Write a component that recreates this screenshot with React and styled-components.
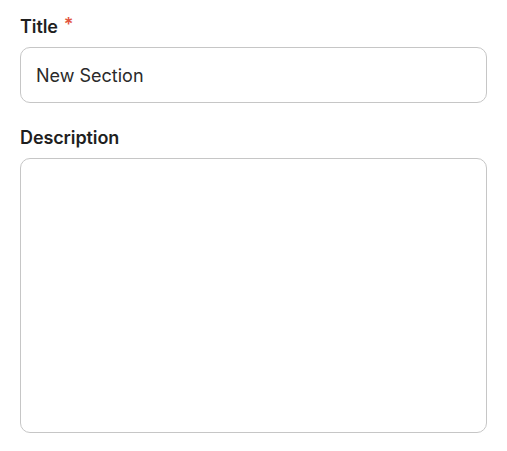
import styled, { createGlobalStyle } from "styled-components";

const GlobalStyle = createGlobalStyle`
  * { margin: 0; padding: 0; box-sizing: border-box; }
  body {
    background: #ffffff;
    font-family: Inter, "Liberation Sans", sans-serif;
  }
`;

const Form = styled.form`
  display: flex;
  flex-direction: column;
  padding: 15px 20px 0 20px;
  width: 507px;
`;

const Field = styled.div`
  display: flex;
  flex-direction: column;
  gap: 9px;
  margin-bottom: ${(p) => p.$gap || 0}px;
`;

const Label = styled.label`
  display: flex;
  align-items: flex-start;
  font-size: 18px;
  font-weight: 600;
  color: #1f1f1f;
  line-height: 23px;
  letter-spacing: -0.1px;
`;

const Required = styled.span`
  color: #e2553f;
  font-size: 18px;
  line-height: 18px;
  margin-left: 6px;
  margin-top: 1px;
`;

const Input = styled.input`
  height: 56px;
  border: 1px solid #c6c6c6;
  border-radius: 10px;
  padding: 0 15px;
  font-family: inherit;
  font-size: 18px;
  color: #2a2a2a;
  outline: none;
`;

const TextArea = styled.textarea`
  height: 275px;
  border: 1px solid #c6c6c6;
  border-radius: 10px;
  padding: 12px 15px;
  font-family: inherit;
  font-size: 18px;
  resize: none;
  outline: none;
`;

export default function App() {
  return (
    <>
      <GlobalStyle />
      <Form>
        <Field $gap={23}>
          <Label>
            Title<Required>*</Required>
          </Label>
          <Input defaultValue="New Section" />
        </Field>
        <Field>
          <Label>Description</Label>
          <TextArea />
        </Field>
      </Form>
    </>
  );
}
